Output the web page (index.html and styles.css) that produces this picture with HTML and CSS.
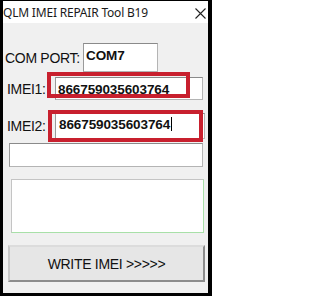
FILE: index.html
```html
<!DOCTYPE html>
<html>
<head>
<meta charset="utf-8">
<link rel="stylesheet" href="styles.css">
</head>
<body>
<div class="window">
  <div class="titlebar">
    <span class="title">QLM IMEI REPAIR Tool B19</span>
    <svg class="close" width="11" height="11" viewBox="0 0 11 11"><path d="M0.5 0.5 L10.5 10.5 M10.5 0.5 L0.5 10.5" stroke="#222" stroke-width="1.1" fill="none"/></svg>
  </div>
  <div class="body">
    <div class="row row-com">
      <span class="label">COM PORT:</span>
      <div class="field com">COM7</div>
    </div>
    <div class="row row-imei1">
      <span class="label">IMEI1:</span>
      <div class="field imei1">866759035603764</div>
      <div class="mark mark1"></div>
    </div>
    <div class="row row-imei2">
      <span class="label">IMEI2:</span>
      <div class="field imei2">866759035603764<span class="caret"></span></div>
      <div class="mark mark2"></div>
    </div>
    <div class="field status"></div>
    <div class="log"></div>
    <button class="btn">WRITE IMEI &gt;&gt;&gt;&gt;&gt;</button>
  </div>
</div>
</body>
</html>
```
FILE: styles.css
```css
html, body {
  margin: 0;
  padding: 0;
  background: #ffffff;
}
.window {
  width: 212px;
  height: 296px;
  box-sizing: border-box;
  border-style: solid;
  border-color: #000;
  border-width: 1px 4px 3px 3px;
  background: #f0f0f0;
  display: flex;
  flex-direction: column;
  font-family: "Liberation Sans", Arial, sans-serif;
  color: #111;
}
.titlebar {
  height: 22px;
  flex: none;
  background: #ffffff;
  display: flex;
  align-items: center;
  justify-content: space-between;
  padding-right: 1px;
}
.title {
  font-family: "Noto Sans", sans-serif;
  font-size: 12px;
  letter-spacing: -0.2px;
  color: #1a1a1a;
  padding-top: 1px;
}
.close {
  margin-right: 1px;
  margin-top: 3px;
}
.body {
  flex: 1;
  display: flex;
  flex-direction: column;
  position: relative;
}
.row {
  position: relative;
  display: flex;
  align-items: center;
}
.label {
  font-size: 14px;
  letter-spacing: -0.3px;
}
.field {
  background: #ffffff;
  box-sizing: border-box;
  border: 1px solid #b4b4b4;
  border-top-color: #8a8a8a;
  border-left-color: #9a9a9a;
  font-size: 13.5px;
  font-weight: bold;
  letter-spacing: -0.1px;
  padding-left: 2px;
  display: flex;
  align-items: flex-start;
}
.row-com {
  margin-top: 20px;
  height: 29px;
}
.row-com .label {
  margin-left: 2px;
  width: 78px;
}
.com {
  width: 75px;
  height: 29px;
  padding-top: 4px;
}
.row-imei1 {
  margin-top: 5px;
  height: 23px;
}
.row-imei1 .label,
.row-imei2 .label {
  margin-left: 4px;
  width: 48px;
}
.imei1 {
  width: 148px;
  height: 23px;
  padding-top: 4px;
}
.row-imei2 {
  margin-top: 13px;
  height: 26px;
}
.imei2 {
  width: 150px;
  height: 26px;
  padding-top: 3px;
  padding-left: 3px;
}
.caret {
  display: inline-block;
  width: 1px;
  height: 14px;
  background: #000;
  margin-left: 1px;
  margin-top: 0px;
}
.mark {
  position: absolute;
  box-sizing: border-box;
  border: 4px solid #c8202e;
}
.mark1 {
  left: 44px;
  top: -5px;
  width: 143px;
  height: 26px;
}
.mark2 {
  left: 45px;
  top: -3px;
  width: 155px;
  height: 32px;
}
.status {
  margin-top: 4px;
  margin-left: 6px;
  width: 194px;
  height: 24px;
}
.log {
  margin-top: 12px;
  margin-left: 8px;
  width: 193px;
  height: 54px;
  box-sizing: border-box;
  background: #ffffff;
  border: 1px solid #a8e0a8;
  border-top-color: #c4c4c4;
  border-left-color: #c4c4c4;
}
.btn {
  margin-top: 12px;
  margin-left: 5px;
  width: 197px;
  height: 37px;
  box-sizing: border-box;
  background: #e6e6e6;
  border: 2px solid #8c8c8c;
  border-top-color: #dcdcdc;
  border-left-color: #c8c8c8;
  font-family: "Liberation Sans", Arial, sans-serif;
  font-size: 14px;
  letter-spacing: -0.3px;
  color: #111;
  padding: 0;
}
```
